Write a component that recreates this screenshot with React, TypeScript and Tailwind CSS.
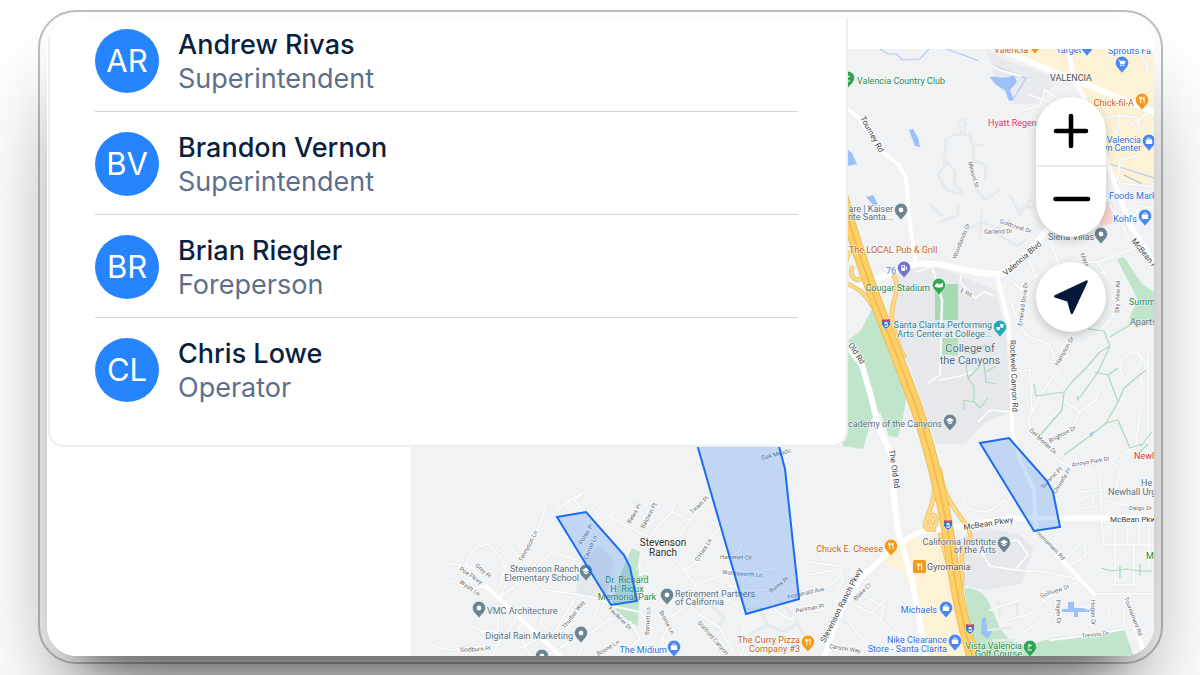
type Person = { initials: string; name: string; role: string };

const people: Person[] = [
  { initials: "AR", name: "Andrew Rivas", role: "Superintendent" },
  { initials: "BV", name: "Brandon Vernon", role: "Superintendent" },
  { initials: "BR", name: "Brian Riegler", role: "Foreperson" },
  { initials: "CL", name: "Chris Lowe", role: "Operator" },
];

const GREEN = "#1f8a47";
const BLUE = "#2f6fe6";
const ORANGE = "#c9661a";
const SLATE = "#56707f";
const TEAL = "#1f8091";
const DARK = "#4a4d50";

type Anchor = "start" | "middle" | "end";
type Place = [text: string, x: number, y: number, fill: string, anchor: Anchor, size?: number];

const places: Place[] = [
  ["Valencia Country Club", 857, 84, GREEN, "start"],
  ["VALENCIA", 1071, 81, DARK, "middle"],
  ["Valencia", 994, 53, ORANGE, "start"],
  ["Target", 1056, 53, BLUE, "start"],
  ["Sprouts Fa", 1108, 54, BLUE, "start"],
  ["Chick-fil-A", 1134, 106, ORANGE, "end"],
  ["Hyatt Regen", 988, 126, "#e2316f", "start"],
  ["Valencia", 1141, 143, BLUE, "end"],
  ["vn Center", 1141, 151, BLUE, "end"],
  ["Foods Mark", 1109, 199, BLUE, "start"],
  ["Kohl's", 1137, 222, BLUE, "end"],
  ["Care | Kaiser", 893, 212, SLATE, "end"],
  ["ente Santa...", 893, 220, SLATE, "end"],
  ["The LOCAL Pub & Grill", 849, 253, ORANGE, "start"],
  ["76", 886, 274, "#6a70c4", "start"],
  ["Cougar Stadium", 930, 291, GREEN, "end"],
  ["Siena Villas", 1048, 240, SLATE, "start"],
  ["Santa Clarita Performing", 992, 328, TEAL, "end"],
  ["Arts Center at College...", 992, 337, TEAL, "end"],
  ["College of", 970, 352, "#4f6c83", "middle", 11],
  ["the Canyons", 970, 364, "#4f6c83", "middle", 11],
  ["Academy of the Canyons", 942, 427, SLATE, "end"],
  ["Summ", 1129, 305, GREEN, "start"],
  ["Aparts", 1130, 325, SLATE, "start"],
  ["Newl", 1134, 459, "#dc2f2f", "start"],
  ["He", 1141, 486, SLATE, "start"],
  ["Newhall Urg", 1108, 495, SLATE, "start"],
  ["M", 1146, 559, GREEN, "start"],
  ["California Institute", 996, 545, SLATE, "end"],
  ["of the Arts", 996, 553, SLATE, "end"],
  ["Gyromania", 927, 570, "#54585c", "start"],
  ["Chuck E. Cheese", 883, 552, ORANGE, "end"],
  ["Michaels", 937, 613, BLUE, "end"],
  ["Nike Clearance", 947, 643, BLUE, "end"],
  ["Store - Santa Clarita", 947, 652, BLUE, "end"],
  ["Vista Valencia", 1022, 649, GREEN, "end"],
  ["Golf Course", 1022, 657, GREEN, "end"],
  ["Stevenson", 663, 546, "#2b2e31", "middle", 10],
  ["Ranch", 663, 556, "#2b2e31", "middle", 10],
  ["Retirement Partners", 675, 597, SLATE, "start"],
  ["of California", 675, 605, SLATE, "start"],
  ["The Midium", 667, 653, BLUE, "end"],
  ["The Curry Pizza", 800, 643, ORANGE, "end"],
  ["Company #3", 800, 652, ORANGE, "end"],
  ["Dr. Richard", 627, 583, GREEN, "middle"],
  ["H. Rioux", 627, 592, GREEN, "middle"],
  ["Memorial Park", 627, 600, GREEN, "middle"],
  ["Stevenson Ranch", 579, 572, SLATE, "end"],
  ["Elementary School", 579, 581, SLATE, "end"],
  ["VMC Architecture", 487, 614, SLATE, "start"],
  ["Digital Rain Marketing", 573, 639, SLATE, "end"],
];

type Street = [text: string, x: number, y: number, angle: number, size: number];

const streets: Street[] = [
  ["Tourney Rd", 860, 118, 61, 8],
  ["Mirasol St", 968, 162, 75, 6],
  ["Woodlands Dr", 956, 259, -68, 6],
  ["Goldcrest Dr", 999, 223, 18, 6],
  ["Garland Dr", 984, 234, -2, 6],
  ["Valencia Blvd", 1006, 276, -41, 8],
  ["E Rd", 960, 292, 24, 6],
  ["Emerald Dove Dr", 1022, 326, -82, 6],
  ["Rockwell Canyon Rd", 1010, 340, 88, 8],
  ["Old Rd", 848, 345, 57, 8],
  ["The Old Rd", 889, 450, 82, 8],
  ["McBean P", 1131, 241, 51, 8],
  ["Maya", 1080, 254, 66, 6],
  ["Sky View Rd", 1119, 313, -88, 6],
  ["Hampton Dr", 1058, 366, -60, 6],
  ["Del Monte Dr", 1029, 431, 43, 6],
  ["Brighton Dr", 1050, 443, -28, 6],
  ["Arroyo Park Dr", 1072, 467, -10, 6],
  ["Summit Pl", 1043, 489, -45, 6],
  ["Chorelle Pl", 1056, 494, -58, 6],
  ["Dalgo Dr", 1129, 510, 0, 6],
  ["McBean Pkw", 1110, 522, 0, 8],
  ["McBean Pkwy", 964, 530, -9, 8],
  ["Tournament Rd", 1034, 531, 46, 6],
  ["Golfview Dr", 1041, 598, -19, 6],
  ["Player Dr", 1056, 600, 88, 6],
  ["Hogan Dr", 1091, 600, 89, 6],
  ["Trevino Dr", 1082, 638, -6, 6],
  ["Tournament Rd", 1124, 598, 69, 6],
  ["Stevenson Ranch Pkwy", 825, 643, -63, 8],
  ["Blake Ct", 856, 601, -46, 6],
  ["Carson Way", 829, 648, 9, 6],
  ["Fitzgerald Ave", 788, 599, -13, 6],
  ["Perlman Pl", 796, 613, -11, 6],
  ["Burns Pl", 771, 593, -36, 6],
  ["Wordsworth Ln", 722, 574, 5, 6],
  ["Hammet Cir", 720, 559, 1, 6],
  ["Oak Meado", 762, 460, -15, 6],
  ["Twain Pl", 692, 514, -42, 6],
  ["O'Hara Ln", 698, 562, -57, 6],
  ["Bates Pl", 630, 524, -58, 6],
  ["Baldwin Pl", 644, 529, -62, 6],
  ["Stafford Canyon", 697, 623, 48, 6],
  ["Barnett Ln", 649, 635, -87, 6],
  ["Bronte Ln", 659, 612, 62, 6],
  ["Faulkner Dr", 608, 609, 45, 6],
  ["Potter Pl", 582, 545, -60, 6],
  ["Carroll Ln", 587, 560, -66, 6],
  ["Tennyson Ln", 522, 562, -62, 6],
  ["Grey Pl", 475, 566, 42, 6],
  ["Poe Pkwy", 459, 570, 34, 6],
  ["Wyatt Ln", 459, 583, 34, 6],
  ["Thurber Way", 565, 629, -53, 6],
  ["Sindburn Pl", 460, 652, -3, 6],
  ["Boone Ln", 598, 656, -30, 6],
];

type Glyph = "dot" | "fork" | "bag" | "cart" | "cap" | "gas" | "golf" | "field" | "masks";
type Pin = [x: number, y: number, fill: string, glyph: Glyph];

const PIN_SLATE = "#6b8491";
const PIN_BLUE = "#4a86ee";
const PIN_ORANGE = "#f09a1a";
const PIN_GREEN = "#30a552";

const pins: Pin[] = [
  [901, 210, PIN_SLATE, "dot"],
  [904, 268, "#7175cb", "gas"],
  [939, 285, PIN_GREEN, "field"],
  [1000, 327, "#1fa9bb", "masks"],
  [950, 421, PIN_SLATE, "cap"],
  [1101, 234, PIN_SLATE, "dot"],
  [1122, 63, PIN_BLUE, "cart"],
  [1142, 100, PIN_ORANGE, "fork"],
  [1149, 141, PIN_BLUE, "bag"],
  [1145, 216, PIN_BLUE, "bag"],
  [848, 78, PIN_GREEN, "golf"],
  [586, 571, PIN_SLATE, "cap"],
  [479, 608, PIN_SLATE, "dot"],
  [581, 633, PIN_SLATE, "dot"],
  [542, 656, PIN_SLATE, "dot"],
  [667, 595, PIN_SLATE, "dot"],
  [674, 647, PIN_BLUE, "bag"],
  [808, 642, PIN_ORANGE, "fork"],
  [891, 546, PIN_ORANGE, "fork"],
  [946, 608, PIN_BLUE, "bag"],
  [955, 641, PIN_BLUE, "bag"],
  [1030, 647, PIN_GREEN, "golf"],
  [1004, 543, PIN_SLATE, "cap"],
  [1035, 44, PIN_ORANGE, "fork"],
  [1087, 46, PIN_BLUE, "bag"],
];

const lanes = [
  "M556 511 L572 499 L583 493 L610 517 L640 533 L664 543 M583 493 L575 500 L590 520 M546 503 L540 525 L518 560 L500 597 M610 517 L620 506 M600 512 L588 530",
  "M496 548 L507 556 M508 545 L520 558 M516 541 L528 554 M486 590 L474 580 L466 562 L475 548 L487 544 L500 555 L505 568 L500 586",
  "M445 563 L470 566 L485 580 M452 580 L470 590 L484 586 M500 597 L530 575 L552 551 L565 556 L578 560 M530 575 L545 590 L575 594 L600 599 L612 606",
  "M497 605 L498 630 L480 632 M470 625 L486 632 L512 634 M512 606 L516 620 L500 640 L492 656 M530 610 L518 630 L530 656",
  "M550 605 L540 622 L560 640 M575 598 L555 632 M612 606 L640 612 L655 632 L670 645 M600 605 L590 625 L560 648 L545 656",
  "M430 645 L450 650 L472 647 L500 645 M520 648 L540 638 M612 618 L588 634 L578 656 M630 622 L640 638 L620 656",
  "M645 545 L655 530 L672 512 L676 500 M672 512 L690 520 L680 535 L672 556 L684 570 L700 560 M690 520 L700 508",
  "M684 570 L695 585 L715 578 L728 570 L752 572 L780 568 M700 560 L710 540 L722 525 L738 515 M722 525 L710 515 M722 560 L738 552 L745 540 M640 560 L640 575 L650 572",
  "M695 585 L690 604 L700 615 L720 628 L735 656 M690 604 L672 616 L662 640 L664 656 M700 615 L714 600 L730 600 L745 612 M714 600 L708 590",
  "M728 585 L745 590 L770 590 L780 580 M770 590 L775 610 L790 620 L800 612 M800 600 L815 590 L830 585 L842 575 M740 620 L748 640 L740 656",
  "M808 562 L840 566 L843 580 L838 592 M820 553 L824 560 M808 575 L835 570 M850 603 L876 615 L892 632 L920 640 L926 656 M862 595 L884 606 M872 612 L896 590 M884 606 L880 622 M892 632 L880 656 M850 625 L866 642",
  "M917 272 L932 266 L942 300 L940 375 L928 383 M963 265 L960 282 L975 298 L985 292 L994 296 M940 380 L960 376 L972 372 M978 422 L990 410 L1010 412",
  "M1010 372 L1030 370 L1032 410 M1010 300 L1018 320 L1026 335 L1050 345 L1058 370 L1040 395 L1028 420 L1032 436 L1060 462 L1072 467 L1110 460 L1130 450 L1148 440",
  "M1008 278 L1022 290 L1035 276 L1055 266 L1070 262 M1035 276 L1028 256 M1050 240 L1060 268 M1080 262 L1098 262 L1130 250 L1154 245 M1098 262 L1106 276 L1118 290 L1120 304 L1110 320 L1098 332",
  "M1072 262 L1090 275 L1108 272 M1100 240 L1090 225 M1110 205 L1130 240 L1154 262 M1148 350 L1148 440 M1140 410 L1136 445 L1154 455 M1138 352 L1146 365 L1140 385",
  "M1120 372 L1122 358 L1132 352 L1142 356 L1138 370 L1126 380 L1120 372 M1060 398 L1080 412 L1096 400 L1100 388 M1060 412 L1045 420 M1080 412 L1070 430",
  "M1047 440 L1062 452 M1082 467 L1100 475 L1103 542 L1103 545 L1154 545 M1115 522 L1115 545 M1127 522 L1127 545 M1139 522 L1139 545 M1149 522 L1149 545 M1115 545 L1115 585 L1134 585 L1134 545 M1149 545 L1149 570",
  "M1080 492 L1100 490 M1080 500 L1092 495 L1094 506 L1082 508 M1103 500 L1125 505 L1140 508 M1110 460 L1120 470 L1116 490",
  "M985 544 L1018 540 L1028 555 L1015 570 L990 566 L980 550 M1015 570 L1045 572 L1082 580 M1062 560 L1080 545 M1070 565 L1086 556 L1085 542 M1094 594 L1154 594 M1082 580 L1060 590 L1040 604",
  "M1094 594 L1094 636 M1056 600 L1056 630 M1124 594 L1124 625 M1094 610 L1080 606 M990 610 L1020 600 M1008 620 L1035 612 M1020 634 L1040 622 M1050 640 L1090 635 L1130 628 M1110 606 L1108 620",
  "M962 500 L970 510 L988 512 L1005 500 L1012 508 M930 478 L940 472",
  "M1096 120 L1120 115 L1138 118 L1140 132 M1120 115 L1118 130 L1105 140 M1108 170 L1120 183 L1154 187 M1118 180 L1120 160 L1140 155 M1154 110 L1130 125 M1122 49 L1124 60 M1140 49 L1148 72",
  "M1060 100 L1045 90 L1040 105 L1025 110 M1030 95 L1050 102 M980 60 L1000 70 L1020 76 M1096 190 L1096 210 M1140 205 L1128 230 M1154 208 L1140 206",
];

const subtleLanes = [
  "M962 133 L958 122 L963 119 L966 124 L964 134 M944 165 L946 140 L955 134 L970 135 L974 150 L973 165 M973 145 L984 145",
  "M948 162 L938 175 L946 190 L960 194 M948 162 L955 172 L954 184 L962 192 M976 188 L985 200 L1000 190 M985 178 L986 165 L976 162 M982 210 L980 240 M965 232 L980 222 L998 228 L1010 220",
  "M1010 195 L1020 215 L1030 200 M1018 210 L1034 206 M1000 236 L1018 246 L1025 240 M940 222 L958 215 L958 205 M930 205 L942 215",
  "M780 600 L796 620 L806 640 M842 620 L856 630 M770 626 L784 632 L796 624 M765 640 L780 645",
  "M740 610 L760 608 L768 625 L750 634 M706 600 L724 618 L716 630",
  "M988 630 L1010 628 M994 640 L1014 640 M998 600 L1000 616 M1016 600 L1018 618 M1008 645 L1020 652",
];

const trails = [
  "M1088 329 L1104 331 L1110 346 L1098 372 L1078 400 L1077 396 M1110 346 L1100 352 L1086 368 L1072 382 L1064 392 L1036 396 L1034 384 M1064 392 L1062 410 L1036 440 M1095 372 L1108 375 L1118 402 L1106 423 L1090 436 L1064 455 M1108 375 L1118 368",
  "M1118 402 L1124 388 L1136 378 L1146 370 M1106 423 L1118 420 L1130 448 L1142 444 M1110 337 L1128 326 L1136 318 M1140 452 L1148 444 M1152 432 L1140 447",
  "M1101 568 L1112 571 L1126 569 L1140 571 L1152 571 M1120 566 L1120 578 M1140 564 L1140 576",
  "M964 410 L964 400 L974 402 L980 408 L988 398 M974 402 L974 386 L968 378 L980 366 M968 378 L966 364 M984 364 L986 382 L996 384 M960 350 L975 354 L985 345 L992 352 M986 372 L996 366",
];

const FREEWAY = "M842 196 C852 235 866 275 880 312 C898 360 912 392 922 425 C934 465 944 505 950 545 C956 590 962 620 974 662";
const RAMPS =
  "M842 283 C862 286 870 300 884 326 M846 262 C850 236 868 268 864 274 C858 286 848 276 852 268 M894 276 C902 292 890 300 892 318 C894 334 900 350 904 356 M934 478 C936 505 926 514 925 526 C928 535 938 526 936 518 C932 510 926 520 934 530 M940 470 C944 500 958 512 968 528 C976 542 960 544 962 560 L962 586 M940 535 L954 585";

function PinGlyph({ glyph }: { glyph: Glyph }) {
  switch (glyph) {
    case "dot":
      return <circle r="2.4" fill="#fff" />;
    case "fork":
      return (
        <path
          d="M-2.4 -3.2 V-1 M-1.2 -3.2 V3.4 M0 -3.2 V-1 M-2.4 -1 H0 M2.1 3.4 V-3.2 C1 -2.6 1 -0.6 2.1 0"
          fill="none"
          stroke="#fff"
          strokeWidth="0.9"
        />
      );
    case "bag":
      return (
        <>
          <rect x="-3.2" y="-1.4" width="6.4" height="4.4" rx="0.6" fill="#fff" />
          <path d="M-1.6 -1.2 A1.6 2 0 0 1 1.6 -1.2" fill="none" stroke="#fff" strokeWidth="0.9" />
        </>
      );
    case "cart":
      return (
        <>
          <path d="M-3.6 -2.8 H-2.4 L-1.4 1 H2.2 L3.2 -1.8 H-2" fill="#fff" stroke="#fff" strokeWidth="0.8" />
          <circle cx="-1" cy="2.6" r="0.8" fill="#fff" />
          <circle cx="1.8" cy="2.6" r="0.8" fill="#fff" />
        </>
      );
    case "cap":
      return <path d="M-4 -1 L0 -3.2 L4 -1 L0 1.2 Z M-2.4 0.6 V2 L0 3.2 L2.4 2 V0.6 L0 1.9 Z" fill="#fff" />;
    case "gas":
      return (
        <path
          d="M-2.6 -3 H1 V3 H-2.6 Z M-1.8 -2.2 V-0.6 H0.2 V-2.2 Z M1.6 -2 L3 -0.8 V2 H2 V0 L1.6 0 Z"
          fill="#fff"
          fillRule="evenodd"
        />
      );
    case "golf":
      return <path d="M-1.6 3 V-3.2 L2.2 -1.6 L-0.8 -0.2 V3 Z M-2.6 3.4 H2 V2.4 H-2.6 Z" fill="#fff" />;
    case "field":
      return <path d="M-4 0 L-1.6 -2 L0.6 -0.6 L4 -2.4 V1.6 C2 3 -2 3 -4 1.6 Z" fill="#fff" />;
    case "masks":
      return <path d="M-3.6 0 H0 V1.6 A1.8 1.8 0 0 1 -3.6 1.6 Z M0.2 -3 H3.6 V-0.8 A1.7 1.7 0 0 1 0.2 -0.8 Z" fill="#fff" />;
  }
}

function Shield({ x, y }: { x: number; y: number }) {
  return (
    <g transform={`translate(${x} ${y})`}>
      <path d="M-3.6 -5 Q0 -3.8 3.6 -5 Q7 1 0 5.4 Q-7 1 -3.6 -5 Z" fill="#4573c4" stroke="#fff" strokeWidth="0.6" />
      <path d="M-3.6 -5 Q0 -3.8 3.6 -5 L4.4 -3 H-4.4 Z" fill="#d0484a" />
      <text y="3.2" textAnchor="middle" fontSize="7" fontWeight="700" fill="#fff">
        5
      </text>
    </g>
  );
}

function SiteMap() {
  return (
    <svg
      className="absolute inset-0 h-full w-full font-[Roboto,sans-serif]"
      viewBox="411 49 743 607"
      preserveAspectRatio="xMaxYMin slice"
      role="img"
      aria-label="Site map"
    >
      <rect x="-600" y="0" width="1800" height="1200" fill="#f0f2f4" />

      {/* Land use */}
      <path d="M893 272 L935 265 L995 290 L1006 330 L1011 412 L985 422 L965 444 L936 444 L912 372 L893 330 Z" fill="#e6e8ec" />
      <path d="M958 540 L985 528 L1018 534 L1034 548 L1026 568 L1022 584 L985 590 L962 585 Z" fill="#e6e8ec" />
      <path d="M575 595 L582 560 L600 545 L614 560 L606 598 Z" fill="#e4e7ec" />
      <path d="M986 49 L1010 62 L1058 78 L1040 104 L1012 104 L996 82 Z" fill="#e8eaed" />
      <path d="M1008 49 H1154 V186 L1120 184 L1106 160 L1096 112 L1076 84 L1042 68 Z" fill="#fdf2d6" />
      <path d="M903 540 L950 535 L966 656 H928 L914 600 L904 572 L890 568 L882 558 Z" fill="#fdf2d6" />
      <path d="M1098 196 L1114 206 L1112 224 L1100 226 Z" fill="#f9d5d3" />

      {/* Parks */}
      <g fill="#c0e5cb">
        <path d="M873 307 L888 332 L908 385 L904 412 L898 437 L889 436 L880 412 L872 418 L863 449 L843 446 V345 L861 330 Z" />
        <path d="M632 548 L640 552 L637 570 L648 576 L640 582 L638 626 L630 622 L611 606 L622 570 Z" />
        <path d="M1117 259 L1124 257 L1142 284 L1154 292 V322 L1136 328 L1129 318 L1138 300 Z" />
        <path d="M964 588 C984 588 988 600 994 614 C1000 632 1010 646 1030 646 C1060 630 1090 640 1124 629 L1134 656 H974 Z" />
      </g>
      <rect x="935" y="284" width="23" height="36" fill="#a5d9b2" />
      <rect x="942" y="338" width="16" height="17" fill="#b4dfc0" />

      {/* Water */}
      <g fill="#9cc0fa">
        <path d="M990 77 C998 76 1004 80 1014 75 L1017 82 L1010 90 L1014 100 L1009 101 L1005 90 C1000 88 994 84 990 77 Z" />
        <path d="M909 130 L913 129 L918 138 L920 147 L915 146 Z" />
        <path d="M848 150 L852 153 L857 164 L848 166 Z" />
        <path d="M866 197 L873 195 L878 204 L874 206 Z" />
        <path d="M982 618 L986 617 L987 628 L992 632 L988 639 L981 634 Z" />
        <path d="M1068 602 H1074 V608 H1090 V612 H1078 V617 H1074 V612 H1062 V609 H1068 Z" />
        <path d="M1089 434 L1094 431 L1092 437 Z" />
      </g>
      <path
        d="M880 49 L888 54 L897 54 L902 60 L920 59 L929 49 M946 49 L1019 75 M1014 98 L1026 78 L1015 76 M1110 164 L1154 178"
        fill="none"
        stroke="#aecbfa"
        strokeWidth="1.2"
      />
      <path d="M1124 175 L1142 184 M1104 160 L1118 184" fill="none" stroke="#9fc3c8" strokeWidth="1.2" />

      {/* Local streets */}
      {subtleLanes.map((d) => (
        <path key={d} d={d} fill="none" stroke="#e7eaec" strokeWidth="2.6" strokeLinejoin="round" strokeLinecap="round" />
      ))}
      {lanes.map((d) => (
        <path key={d} d={d} fill="none" stroke="#e7eaec" strokeWidth="2.8" strokeLinejoin="round" strokeLinecap="round" />
      ))}
      {lanes.map((d) => (
        <path key={d} d={d} fill="none" stroke="#fcfdfd" strokeWidth="1.6" strokeLinejoin="round" strokeLinecap="round" />
      ))}
      {trails.map((d) => (
        <path key={d} d={d} fill="none" stroke="#a9dab7" strokeWidth="1.2" strokeLinejoin="round" />
      ))}

      {/* Arterials */}
      <g fill="none" stroke="#fff" strokeLinejoin="round" strokeLinecap="round">
        <path d="M842 105 L858 117 L880 150 L898 164 L906 178 L910 225 L916 264" strokeWidth="4" />
        <path d="M842 292 L875 280 L900 268 C940 255 960 275 1000 274 C1020 262 1030 252 1045 232 L1060 215" strokeWidth="6" />
        <path d="M997 276 L1008 320 L1012 370 L1012 430 L1020 460 L1034 490 L1036 530 L1062 560 L1094 594" strokeWidth="4" />
        <path d="M843 340 L862 365 L872 400 L878 425 L893 460 L894 500 L898 530 L912 580 L926 656" strokeWidth="6" />
        <path d="M822 664 L840 612 L862 577 L895 546 L920 532 L960 526 L1010 518 L1154 518" strokeWidth="5" />
        <path d="M486 586 L520 618 L560 656" strokeWidth="4" />
        <path d="M1000 49 L1035 64 L1070 78 L1154 112" strokeWidth="6" />
        <path d="M1068 49 L1074 78 L1090 110 L1110 170 L1130 225 L1154 262" strokeWidth="5" />
        <path d="M1128 600 L1136 630 L1146 656" strokeWidth="4" />
      </g>

      {/* Interstate 5 */}
      <g fill="none" strokeLinecap="round">
        <path d={RAMPS} stroke="#f0c065" strokeWidth="4.6" />
        <path d={RAMPS} stroke="#fdd98a" strokeWidth="3" />
        <path d={FREEWAY} stroke="#efb84f" strokeWidth="12.4" />
        <path d={FREEWAY} stroke="#fdd06a" strokeWidth="10.6" />
        <path d={FREEWAY} stroke="#f3b548" strokeWidth="1.4" />
      </g>
      <Shield x={886} y={324} />
      <Shield x={948} y={525} />
      <Shield x={970} y={629} />

      {/* Labels */}
      {streets.map(([text, x, y, angle, size]) => (
        <text
          key={`${text}-${x}`}
          transform={`translate(${x} ${y}) rotate(${angle})`}
          fontSize={size}
          fill={size > 6 ? "#3f4246" : "#64686c"}
          stroke="#fff"
          strokeWidth="1.5"
          paintOrder="stroke"
        >
          {text}
        </text>
      ))}
      {pins.map(([x, y, fill, glyph]) => (
        <g key={`${x}-${y}`} transform={`translate(${x} ${y})`}>
          <path
            d="M0 10.6 C-0.9 7.4 -6.6 4.6 -6.6 -0.2 A6.6 6.6 0 0 1 6.6 -0.2 C6.6 4.6 0.9 7.4 0 10.6 Z"
            fill={fill}
            stroke="#fff"
            strokeWidth="0.5"
          />
          <PinGlyph glyph={glyph} />
        </g>
      ))}
      <g transform="translate(919.5 566.5)">
        <rect x="-6.5" y="-6.5" width="13" height="13" rx="1.5" fill="#f09a1a" />
        <PinGlyph glyph="fork" />
      </g>
      {places.map(([text, x, y, fill, anchor, size = 9]) => (
        <text
          key={`${text}-${y}`}
          x={x}
          y={y}
          fill={fill}
          textAnchor={anchor}
          fontSize={size}
          stroke="#fff"
          strokeWidth="1.2"
          strokeOpacity="0.7"
          paintOrder="stroke"
        >
          {text}
        </text>
      ))}

      {/* Job sites */}
      <g fill="#1a73f0" fillOpacity="0.22" stroke="#1a6cf0" strokeWidth="2">
        <path d="M557 517 L586 512 L624 555 L630 567 L637 601 L611 605 Z" />
        <path d="M690 420 L746 614 L799 599 L785 469 L772 420 Z" />
        <path d="M980 443 L1009 438 L1047 481 L1053 492 L1060 527 L1034 531 Z" />
      </g>
    </svg>
  );
}

function PeoplePanel() {
  return (
    <section className="z-10 col-start-1 row-start-1 mx-px w-full max-w-[800px] self-start rounded-b-2xl border-x-2 border-b-2 border-[#eceef0] bg-white pt-2 pr-12 pb-10 pl-[45px]">
      <ul>
        {people.map((person) => (
          <li
            key={person.initials}
            className="flex items-center gap-[19px] border-b border-[#d0d5dc] pb-[15px] not-first:pt-[17px] last:border-b-0 last:pb-0"
          >
            <span className="flex size-16 shrink-0 items-center justify-center rounded-full bg-[#2684ff] text-[31px] text-white">
              {person.initials}
            </span>
            <div className="pt-0.5 text-[27px] leading-[34px]">
              <p className="font-medium text-[#0b1f40]">{person.name}</p>
              <p className="text-[#5e6f8b]">{person.role}</p>
            </div>
          </li>
        ))}
      </ul>
    </section>
  );
}

function MapControls() {
  return (
    <div className="absolute top-12 right-12 flex w-[70px] flex-col gap-[25px]">
      <div className="flex flex-col overflow-hidden rounded-full bg-white shadow-[0_3px_10px_rgba(0,0,0,0.2)]">
        <button type="button" aria-label="Zoom in" className="flex h-[70px] items-center justify-center border-b-2 border-[#e9ebee]">
          <svg className="size-10" viewBox="0 0 40 40" fill="none" stroke="#000" strokeWidth="4.6" strokeLinecap="round">
            <path d="M20 5 V35 M5 20 H35" />
          </svg>
        </button>
        <button type="button" aria-label="Zoom out" className="flex h-[70px] items-center justify-center">
          <svg className="size-10" viewBox="0 0 40 40" fill="none" stroke="#000" strokeWidth="4.6" strokeLinecap="round">
            <path d="M4.5 17 H37" />
          </svg>
        </button>
      </div>
      <button
        type="button"
        aria-label="Center on my location"
        className="flex h-[70px] items-center justify-center rounded-full bg-white shadow-[0_3px_10px_rgba(0,0,0,0.2)]"
      >
        <svg className="size-10" viewBox="0 0 40 40" fill="#07193b" stroke="#07193b" strokeWidth="2.4" strokeLinejoin="round">
          <path d="M35.6 4.6 L20.8 36 L17.2 23.6 L4.2 19.4 Z" />
        </svg>
      </button>
    </div>
  );
}

export default function App() {
  return (
    <main className="flex min-h-screen overflow-hidden bg-white pt-[10px] pr-[37px] pb-[11px] pl-[38px] font-[Inter,sans-serif]">
      <div className="flex flex-1 rounded-[38px] border-2 border-[#80808080] px-[7px] py-[6px]">
        <div className="flex flex-1 rounded-[30px] shadow-[0_62px_100px_-22px_rgba(0,0,0,0.48),0_36px_40px_-36px_rgba(0,0,0,0.5)]">
          <div className="grid flex-1 overflow-hidden rounded-[30px] bg-white">
            <PeoplePanel />
            <div className="relative col-start-1 row-start-1 mt-[31px] ml-[364px] overflow-hidden rounded-tr-lg">
              <SiteMap />
              <MapControls />
            </div>
          </div>
        </div>
      </div>
    </main>
  );
}
